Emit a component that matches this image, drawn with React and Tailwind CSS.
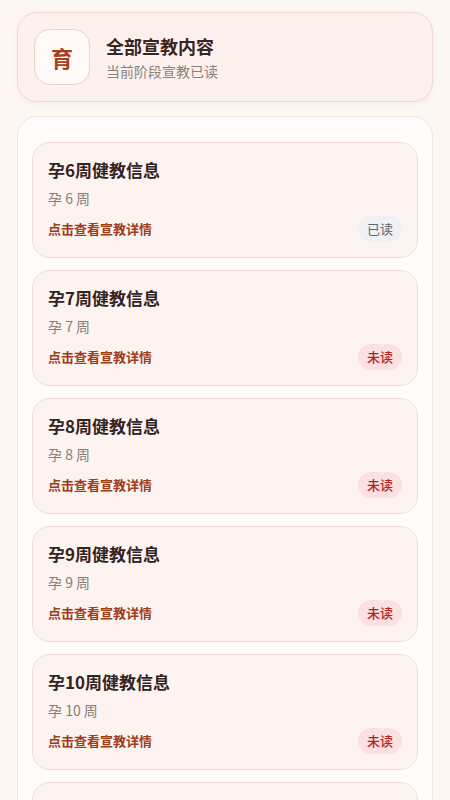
const ITEMS = [
  { week: 6, read: true },
  { week: 7, read: false },
  { week: 8, read: false },
  { week: 9, read: false },
  { week: 10, read: false },
  { week: 11, read: false },
];

const ItemCard = ({ week, read }) => (
  <div className="h-[116px] rounded-[18px] border border-[#f1ddd5] bg-[#fdf3f0] px-[15px] pt-[16px]">
    <div className="text-[17px] leading-[22px] font-bold text-[#33231f]">孕{week}周健教信息</div>
    <div className="mt-[7px] text-[14px] leading-[20px] text-[#8b7b76]">孕 {week} 周</div>
    <div className="mt-[8px] flex items-center justify-between">
      <span className="text-[13px] font-bold text-[#a23a1c]">点击查看宣教详情</span>
      {read ? (
        <span className="flex h-[26px] w-[44px] items-center justify-center rounded-full bg-[#eef0f3] text-[13px] text-[#5d6470]">已读</span>
      ) : (
        <span className="flex h-[26px] w-[44px] items-center justify-center rounded-full bg-[#fbe0e0] text-[13px] font-medium text-[#b42323]">未读</span>
      )}
    </div>
  </div>
);

export default function App() {
  return (
    <div
      className="h-[800px] overflow-hidden bg-[#fdf7f4] px-[17px] pt-3"
      style={{ fontFamily: '"Noto Sans CJK SC", "Noto Sans", sans-serif' }}
    >
      {/* header */}
      <div className="flex h-[90px] items-center gap-4 rounded-[20px] border border-[#f0d9cf] bg-[#fcf1ed] px-4 shadow-[0_2px_6px_rgba(180,120,100,0.08)]">
        <div className="flex h-[56px] w-[56px] items-center justify-center rounded-[16px] border border-[#ebd3c9] bg-[#fffaf8]">
          <span className="text-[22px] font-bold text-[#a6401f]">育</span>
        </div>
        <div>
          <div className="text-[18px] leading-[26px] font-bold text-[#3a2520]">全部宣教内容</div>
          <div className="mt-[2px] text-[14px] leading-[20px] text-[#8f7f79]">当前阶段宣教已读</div>
        </div>
      </div>

      {/* list */}
      <div className="mt-[14px] rounded-[20px] border border-[#f3e3dc] bg-[#fffcfb] px-[14px] pt-[25px] pb-4">
        <div className="flex flex-col gap-3">
          {ITEMS.map((it) => (
            <ItemCard key={it.week} {...it} />
          ))}
        </div>
      </div>
    </div>
  );
}
